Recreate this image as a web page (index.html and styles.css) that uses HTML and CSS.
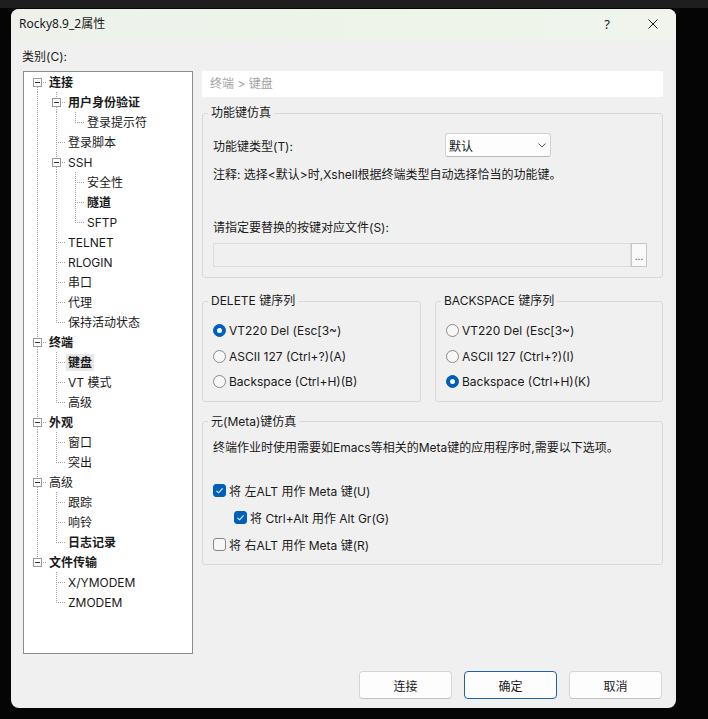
FILE: index.html
```html
<!DOCTYPE html>
<html lang="zh-CN">
<head>
<meta charset="utf-8">
<title>Rocky8.9_2属性</title>
<link rel="stylesheet" href="styles.css">
</head>
<body>
<div class="dialog">
  <div class="titlebar">
    <span class="title">Rocky8.9_2属性</span>
    <span class="tb-btn">?</span>
    <span class="tb-btn"><svg width="10" height="10" viewBox="0 0 10 10"><path d="M0.5 0.5L9.5 9.5M9.5 0.5L0.5 9.5" stroke="#1a1a1a" stroke-width="1"/></svg></span>
  </div>
  <div class="content">
    <div class="cat-label">类别(C):</div>
    <div class="main">
      <div class="tree">
        <div class="row"><span class="g exp exp-down"><svg class="box" width="9" height="9" viewBox="0 0 9 9"><rect x="0.5" y="0.5" width="8" height="8" fill="#fff" stroke="#9a9a9a"/><path d="M2 4.5h5" stroke="#333"/></svg></span><span class="lbl b">连接</span></div>
        <div class="row"><span class="g gi"></span><span class="g exp exp-up exp-down"><svg class="box" width="9" height="9" viewBox="0 0 9 9"><rect x="0.5" y="0.5" width="8" height="8" fill="#fff" stroke="#9a9a9a"/><path d="M2 4.5h5" stroke="#333"/></svg></span><span class="lbl b">用户身份验证</span></div>
        <div class="row"><span class="g gi"></span><span class="g gi"></span><span class="g gl"></span><span class="lbl">登录提示符</span></div>
        <div class="row"><span class="g gi"></span><span class="g gt"></span><span class="lbl">登录脚本</span></div>
        <div class="row"><span class="g gi"></span><span class="g exp exp-up exp-down"><svg class="box" width="9" height="9" viewBox="0 0 9 9"><rect x="0.5" y="0.5" width="8" height="8" fill="#fff" stroke="#9a9a9a"/><path d="M2 4.5h5" stroke="#333"/></svg></span><span class="lbl">SSH</span></div>
        <div class="row"><span class="g gi"></span><span class="g gi"></span><span class="g gt"></span><span class="lbl">安全性</span></div>
        <div class="row"><span class="g gi"></span><span class="g gi"></span><span class="g gt"></span><span class="lbl b">隧道</span></div>
        <div class="row"><span class="g gi"></span><span class="g gi"></span><span class="g gl"></span><span class="lbl">SFTP</span></div>
        <div class="row"><span class="g gi"></span><span class="g gt"></span><span class="lbl">TELNET</span></div>
        <div class="row"><span class="g gi"></span><span class="g gt"></span><span class="lbl">RLOGIN</span></div>
        <div class="row"><span class="g gi"></span><span class="g gt"></span><span class="lbl">串口</span></div>
        <div class="row"><span class="g gi"></span><span class="g gt"></span><span class="lbl">代理</span></div>
        <div class="row"><span class="g gi"></span><span class="g gl"></span><span class="lbl">保持活动状态</span></div>
        <div class="row"><span class="g exp exp-up exp-down"><svg class="box" width="9" height="9" viewBox="0 0 9 9"><rect x="0.5" y="0.5" width="8" height="8" fill="#fff" stroke="#9a9a9a"/><path d="M2 4.5h5" stroke="#333"/></svg></span><span class="lbl b">终端</span></div>
        <div class="row"><span class="g gi"></span><span class="g gt"></span><span class="lbl b sel">键盘</span></div>
        <div class="row"><span class="g gi"></span><span class="g gt"></span><span class="lbl">VT 模式</span></div>
        <div class="row"><span class="g gi"></span><span class="g gl"></span><span class="lbl">高级</span></div>
        <div class="row"><span class="g exp exp-up exp-down"><svg class="box" width="9" height="9" viewBox="0 0 9 9"><rect x="0.5" y="0.5" width="8" height="8" fill="#fff" stroke="#9a9a9a"/><path d="M2 4.5h5" stroke="#333"/></svg></span><span class="lbl b">外观</span></div>
        <div class="row"><span class="g gi"></span><span class="g gt"></span><span class="lbl">窗口</span></div>
        <div class="row"><span class="g gi"></span><span class="g gl"></span><span class="lbl">突出</span></div>
        <div class="row"><span class="g exp exp-up exp-down"><svg class="box" width="9" height="9" viewBox="0 0 9 9"><rect x="0.5" y="0.5" width="8" height="8" fill="#fff" stroke="#9a9a9a"/><path d="M2 4.5h5" stroke="#333"/></svg></span><span class="lbl">高级</span></div>
        <div class="row"><span class="g gi"></span><span class="g gt"></span><span class="lbl">跟踪</span></div>
        <div class="row"><span class="g gi"></span><span class="g gt"></span><span class="lbl">响铃</span></div>
        <div class="row"><span class="g gi"></span><span class="g gl"></span><span class="lbl b">日志记录</span></div>
        <div class="row"><span class="g exp exp-up"><svg class="box" width="9" height="9" viewBox="0 0 9 9"><rect x="0.5" y="0.5" width="8" height="8" fill="#fff" stroke="#9a9a9a"/><path d="M2 4.5h5" stroke="#333"/></svg></span><span class="lbl b">文件传输</span></div>
        <div class="row"><span class="g"></span><span class="g gt"></span><span class="lbl">X/YMODEM</span></div>
        <div class="row"><span class="g"></span><span class="g gl"></span><span class="lbl">ZMODEM</span></div>
      </div>
      <div class="panel">
        <div class="crumb">终端 &gt; 键盘</div>
        <fieldset class="grp g1">
          <legend>功能键仿真</legend>
          <div class="g1-body">
            <div class="type-row">
              <span class="type-label">功能键类型(T):</span>
              <span class="select"><span class="sel-text">默认</span><svg width="8" height="5" viewBox="0 0 8 5"><path d="M0.5 0.5L4 4L7.5 0.5" fill="none" stroke="#555" stroke-width="1"/></svg></span>
            </div>
            <div class="note">注释: 选择&lt;默认&gt;时,Xshell根据终端类型自动选择恰当的功能键。</div>
            <div class="file-label">请指定要替换的按键对应文件(S):</div>
            <div class="file-row">
              <span class="file-input"></span>
              <span class="browse">...</span>
            </div>
          </div>
        </fieldset>
        <div class="grp-row">
          <fieldset class="grp g2">
            <legend>DELETE 键序列</legend>
            <div class="opts">
              <div class="opt"><span class="radio on"></span><span class="opt-text">VT220 Del (Esc[3~)</span></div>
              <div class="opt"><span class="radio"></span><span class="opt-text">ASCII 127 (Ctrl+?)(A)</span></div>
              <div class="opt"><span class="radio"></span><span class="opt-text">Backspace (Ctrl+H)(B)</span></div>
            </div>
          </fieldset>
          <fieldset class="grp g3">
            <legend>BACKSPACE 键序列</legend>
            <div class="opts">
              <div class="opt"><span class="radio"></span><span class="opt-text">VT220 Del (Esc[3~)</span></div>
              <div class="opt"><span class="radio"></span><span class="opt-text">ASCII 127 (Ctrl+?)(I)</span></div>
              <div class="opt"><span class="radio on"></span><span class="opt-text">Backspace (Ctrl+H)(K)</span></div>
            </div>
          </fieldset>
        </div>
        <fieldset class="grp g4">
          <legend>元(Meta)键仿真</legend>
          <div class="g4-body">
            <div class="desc">终端作业时使用需要如Emacs等相关的Meta键的应用程序时,需要以下选项。</div>
            <div class="checks">
              <div class="chk"><span class="cb on"><svg width="11" height="11" viewBox="0 0 11 11"><path d="M2.5 5.8L4.6 7.8L8.6 3.4" fill="none" stroke="#fff" stroke-width="1.1"/></svg></span><span class="opt-text">将 左ALT 用作 Meta 键(U)</span></div>
              <div class="chk sub"><span class="cb on"><svg width="11" height="11" viewBox="0 0 11 11"><path d="M2.5 5.8L4.6 7.8L8.6 3.4" fill="none" stroke="#fff" stroke-width="1.1"/></svg></span><span class="opt-text">将 Ctrl+Alt 用作 Alt Gr(G)</span></div>
              <div class="chk"><span class="cb"></span><span class="opt-text">将 右ALT 用作 Meta 键(R)</span></div>
            </div>
          </div>
        </fieldset>
      </div>
    </div>
    <div class="footer">
      <span class="btn">连接</span>
      <span class="btn default">确定</span>
      <span class="btn">取消</span>
    </div>
  </div>
</div>
</body>
</html>
```

FILE: styles.css
```css
html, body {
  margin: 0;
  padding: 0;
  background: #050505;
}
body {
  font-family: "Inter", "Noto Sans CJK SC", sans-serif;
  font-size: 12px;
  color: #1a1a1a;
  padding-top: 9px;
  padding-left: 11px;
  height: 719px;
  box-sizing: border-box;
  background: linear-gradient(to bottom, #1e1e1e 0, #1e1e1e 8px, #050505 8px);
}
.dialog {
  width: 665px;
  height: 699px;
  background: #f0f0f0;
  border-radius: 8px;
  overflow: hidden;
  display: flex;
  flex-direction: column;
}
.titlebar {
  height: 31px;
  flex: none;
  display: flex;
  align-items: center;
  background: linear-gradient(to right, #edf1ea, #eef4ea 60%, #f0f4ed);
  padding-left: 8px;
  padding-bottom: 2px;
  box-sizing: border-box;
}
.title {
  margin-right: auto;
  line-height: 16px;
  font-family: "Noto Sans", "Noto Sans CJK SC", sans-serif;
}
.tb-btn {
  width: 46px;
  display: flex;
  align-items: center;
  justify-content: center;
  font-size: 13px;
  line-height: 16px;
  font-family: "Noto Sans", sans-serif;
}
.content {
  flex: 1;
  display: flex;
  flex-direction: column;
  padding: 9px 13px 9px 12px;
}
.cat-label {
  line-height: 16px;
  margin-left: -1px;
}
.main {
  margin-top: 6px;
  height: 583px;
  display: flex;
  gap: 9px;
}
.tree {
  width: 170px;
  box-sizing: border-box;
  border: 1px solid #8c8c8c;
  background: #fff;
  padding-left: 4px;
}
.row {
  height: 20px;
  display: flex;
  align-items: center;
}
.g {
  width: 19px;
  height: 20px;
  flex: none;
  display: flex;
  align-items: flex-start;
}
.gi {
  background: repeating-linear-gradient(to bottom, #a0a0a0 0 1px, transparent 1px 2px) 9px 0 / 1px 20px no-repeat;
}
.gt {
  background:
    repeating-linear-gradient(to bottom, #a0a0a0 0 1px, transparent 1px 2px) 9px 0 / 1px 20px no-repeat,
    repeating-linear-gradient(to right, #a0a0a0 0 1px, transparent 1px 2px) 11px 10px / 8px 1px no-repeat;
}
.gl {
  background:
    repeating-linear-gradient(to bottom, #a0a0a0 0 1px, transparent 1px 2px) 9px 0 / 1px 11px no-repeat,
    repeating-linear-gradient(to right, #a0a0a0 0 1px, transparent 1px 2px) 11px 10px / 8px 1px no-repeat;
}
.exp {
  background:
    repeating-linear-gradient(to right, #a0a0a0 0 1px, transparent 1px 2px) 15px 10px / 4px 1px no-repeat;
}
.exp-up {
  background:
    repeating-linear-gradient(to bottom, #a0a0a0 0 1px, transparent 1px 2px) 9px 0 / 1px 5px no-repeat,
    repeating-linear-gradient(to right, #a0a0a0 0 1px, transparent 1px 2px) 15px 10px / 4px 1px no-repeat;
}
.exp-down {
  background:
    repeating-linear-gradient(to bottom, #a0a0a0 0 1px, transparent 1px 2px) 9px 15px / 1px 5px no-repeat,
    repeating-linear-gradient(to right, #a0a0a0 0 1px, transparent 1px 2px) 15px 10px / 4px 1px no-repeat;
}
.exp-up.exp-down {
  background:
    repeating-linear-gradient(to bottom, #a0a0a0 0 1px, transparent 1px 2px) 9px 0 / 1px 5px no-repeat,
    repeating-linear-gradient(to bottom, #a0a0a0 0 1px, transparent 1px 2px) 9px 15px / 1px 5px no-repeat,
    repeating-linear-gradient(to right, #a0a0a0 0 1px, transparent 1px 2px) 15px 10px / 4px 1px no-repeat;
}
.box {
  display: block;
  margin-left: 5px;
  margin-top: 6px;
}
.lbl {
  padding: 0 2px;
  line-height: 17px;
  white-space: nowrap;
}
.lbl.b {
  font-weight: 700;
}
.lbl.sel {
  background: #e8e8e8;
}
.panel {
  flex: 1;
  display: flex;
  flex-direction: column;
}
.crumb {
  height: 26px;
  line-height: 26px;
  background: #fff;
  padding-left: 8px;
  color: #a3a3a3;
  flex: none;
}
.grp {
  margin: 0;
  padding: 0;
  border: 1px solid #d9d9d9;
  border-radius: 3px;
  min-width: 0;
}
.grp legend {
  margin-left: 5px;
  padding: 0 3px;
  line-height: 16px;
}
.g1 {
  margin-top: 8px;
}
.g1-body {
  padding: 0 15px 10px 10px;
}
.type-row {
  margin-top: 12px;
  display: flex;
  align-items: center;
  height: 24px;
}
.type-label {
  width: 232px;
}
.select {
  width: 106px;
  height: 24px;
  box-sizing: border-box;
  border: 1px solid #d2d2d2;
  border-bottom-color: #b8b8b8;
  border-radius: 3px;
  background: #fdfdfd;
  display: flex;
  align-items: center;
  padding: 0 4px 0 3px;
}
.sel-text {
  flex: 1;
}
.note {
  margin-top: 10px;
  line-height: 16px;
  white-space: nowrap;
}
.file-label {
  margin-top: 37px;
  line-height: 16px;
}
.file-row {
  margin-top: 7px;
  display: flex;
  height: 24px;
}
.file-input {
  flex: 1;
  border: 1px solid #dcdcdc;
  background: #f0f0f0;
}
.browse {
  width: 16px;
  box-sizing: border-box;
  border: 1px solid #c6c6c6;
  background: #f9f9f9;
  font-size: 10px;
  line-height: 10px;
  display: flex;
  justify-content: center;
  align-items: flex-end;
  padding-bottom: 5px;
  color: #333;
}
.grp-row {
  margin-top: 15px;
  display: flex;
  gap: 14px;
}
.g2 {
  width: 219px;
  box-sizing: border-box;
}
.g3 {
  flex: 1;
}
.opts {
  margin-top: 9px;
  padding: 0 0 6px 10px;
}
.opt {
  height: 25.5px;
  display: flex;
  align-items: center;
}
.radio {
  width: 13px;
  height: 13px;
  box-sizing: border-box;
  border: 1px solid #8a8a8a;
  border-radius: 50%;
  background: #f7f7f7;
  display: flex;
  align-items: center;
  justify-content: center;
  flex: none;
}
.radio.on {
  background: #005fb8;
  border-color: #005fb8;
}
.radio.on::after {
  content: "";
  width: 5px;
  height: 5px;
  border-radius: 50%;
  background: #fff;
}
.opt-text {
  margin-left: 3px;
  white-space: nowrap;
}
.g4 {
  margin-top: 12px;
}
.g4-body {
  padding: 0 10px 6px 10px;
}
.desc {
  margin-top: 10px;
  line-height: 16px;
  white-space: nowrap;
}
.checks {
  margin-top: 21px;
}
.chk {
  height: 27px;
  display: flex;
  align-items: center;
}
.chk.sub {
  padding-left: 21px;
}
.cb {
  width: 13px;
  height: 13px;
  box-sizing: border-box;
  border: 1px solid #868686;
  border-radius: 3px;
  background: #f7f7f7;
  display: flex;
  align-items: center;
  justify-content: center;
  flex: none;
}
.cb.on {
  background: #005fb8;
  border-color: #005fb8;
}
.cb svg {
  display: block;
}
.footer {
  margin-top: 17px;
  display: flex;
  justify-content: flex-end;
  gap: 12px;
  padding-right: 1px;
}
.btn {
  width: 93px;
  height: 28px;
  box-sizing: border-box;
  border: 1px solid #d5d5d5;
  border-bottom-color: #c2c2c2;
  border-radius: 4px;
  background: #fdfdfd;
  display: flex;
  align-items: center;
  justify-content: center;
}
.btn.default {
  border: 1px solid #1c63ad;
}
```
